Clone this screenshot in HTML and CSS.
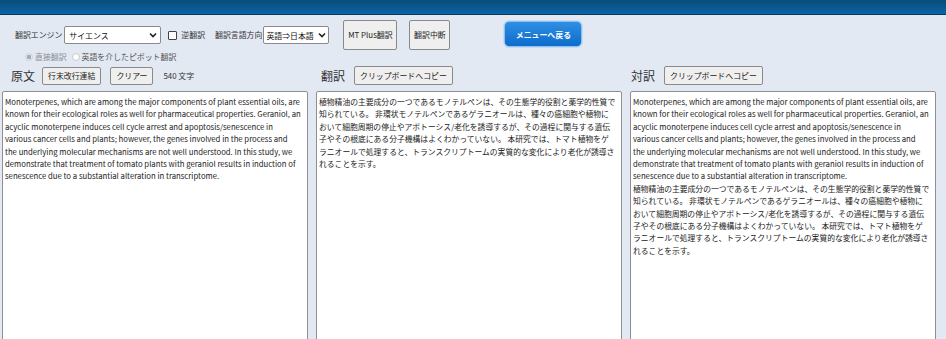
FILE: index.html
```html
<!DOCTYPE html>
<html lang="ja">
<head>
<meta charset="utf-8">
<title>翻訳</title>
<link rel="stylesheet" href="styles.css">
</head>
<body>
<header class="topbar"></header>
<section class="controls">
  <div class="row1">
    <span class="lbl">翻訳エンジン</span>
    <select class="sel sel-engine"><option>サイエンス</option></select>
    <input type="checkbox" class="chk" id="rev"><label for="rev" class="lbl chk-lbl">逆翻訳</label>
    <span class="lbl dir-lbl">翻訳言語方向</span>
    <select class="sel sel-dir"><option>英語⇒日本語</option></select>
    <button class="btn btn-big btn-mt">MT Plus翻訳</button>
    <button class="btn btn-big btn-stop">翻訳中断</button>
    <button class="btn-menu">メニューへ戻る</button>
  </div>
  <div class="row2">
    <input type="radio" class="rad" name="mode" checked disabled><span class="rad-lbl dis">直接翻訳</span>
    <input type="radio" class="rad" name="mode"><span class="rad-lbl">英語を介したピボット翻訳</span>
  </div>
</section>
<main class="panes">
  <div class="pane pane-src">
    <div class="pane-head">
      <h2 class="ttl">原文</h2>
      <button class="btn btn-sm">行末改行連結</button>
      <button class="btn btn-sm btn-clear">クリアー</button>
      <span class="count">540 文字</span>
    </div>
    <div class="box">
      <div class="en">Monoterpenes, which are among the major components of plant essential oils, are</div>
      <div class="en">known for their ecological roles as well for pharmaceutical properties. Geraniol, an</div>
      <div class="en">acyclic monoterpene induces cell cycle arrest and apoptosis/senescence in</div>
      <div class="en">various cancer cells and plants; however, the genes involved in the process and</div>
      <div class="en">the underlying molecular mechanisms are not well understood. In this study, we</div>
      <div class="en">demonstrate that treatment of tomato plants with geraniol results in induction of</div>
      <div class="en">senescence due to a substantial alteration in transcriptome.</div>
    </div>
  </div>
  <div class="pane pane-tr">
    <div class="pane-head">
      <h2 class="ttl">翻訳</h2>
      <button class="btn btn-sm">クリップボードへコピー</button>
    </div>
    <div class="box">
      <div class="ja">植物精油の主要成分の一つであるモノテルペンは、その生態学的役割と薬学的性質で</div>
      <div class="ja">知られている。 非環状モノテルペンであるゲラニオールは、種々の癌細胞や植物に</div>
      <div class="ja">おいて細胞周期の停止やアポトーシス/老化を誘導するが、その過程に関与する遺伝</div>
      <div class="ja">子やその根底にある分子機構はよくわかっていない。 本研究では、トマト植物をゲ</div>
      <div class="ja">ラニオールで処理すると、トランスクリプトームの実質的な変化により老化が誘導さ</div>
      <div class="ja">れることを示す。</div>
    </div>
  </div>
  <div class="pane pane-bi">
    <div class="pane-head">
      <h2 class="ttl">対訳</h2>
      <button class="btn btn-sm">クリップボードへコピー</button>
    </div>
    <div class="box">
      <div class="en">Monoterpenes, which are among the major components of plant essential oils, are</div>
      <div class="en">known for their ecological roles as well for pharmaceutical properties. Geraniol, an</div>
      <div class="en">acyclic monoterpene induces cell cycle arrest and apoptosis/senescence in</div>
      <div class="en">various cancer cells and plants; however, the genes involved in the process and</div>
      <div class="en">the underlying molecular mechanisms are not well understood. In this study, we</div>
      <div class="en">demonstrate that treatment of tomato plants with geraniol results in induction of</div>
      <div class="en">senescence due to a substantial alteration in transcriptome.</div>
      <div class="ja">植物精油の主要成分の一つであるモノテルペンは、その生態学的役割と薬学的性質で</div>
      <div class="ja">知られている。 非環状モノテルペンであるゲラニオールは、種々の癌細胞や植物に</div>
      <div class="ja">おいて細胞周期の停止やアポトーシス/老化を誘導するが、その過程に関与する遺伝</div>
      <div class="ja">子やその根底にある分子機構はよくわかっていない。 本研究では、トマト植物をゲ</div>
      <div class="ja">ラニオールで処理すると、トランスクリプトームの実質的な変化により老化が誘導さ</div>
      <div class="ja">れることを示す。</div>
    </div>
  </div>
</main>
</body>
</html>
```
FILE: styles.css
```css
* { box-sizing: border-box; }
html, body { margin: 0; padding: 0; }
body {
  background: #e3e9f3;
  font-family: "Noto Sans CJK JP", "Noto Sans", sans-serif;
  font-size: 8px;
  color: #222;
  width: 946px;
  height: 339px;
  overflow: hidden;
}
.topbar {
  height: 15px;
  background: linear-gradient(#0a4b7a, #0a64a6);
  border-bottom: 1px solid #0a3658;
}
.controls { padding-left: 15px; }
.row1 {
  display: flex;
  align-items: center;
  height: 30px;
  margin-top: 5px;
}
.lbl { color: #333; font-size: 7.9px; line-height: 1; white-space: nowrap; }
.sel {
  appearance: none;
  -webkit-appearance: none;
  height: 18px;
  border: 1px solid #8a8a8a;
  border-radius: 2px;
  background-color: #fff;
  background-image: url("data:image/svg+xml;utf8,<svg xmlns='http://www.w3.org/2000/svg' width='8' height='6' viewBox='0 0 8 6'><path d='M1 1.5 L4 4.5 L7 1.5' fill='none' stroke='%23222' stroke-width='1.6'/></svg>");
  background-repeat: no-repeat;
  background-position: right 3px center;
  font-family: inherit;
  font-size: 7.9px;
  color: #111;
  padding: 0 12px 0 4px;
  margin: 0;
}
.sel-engine { width: 97px; margin-left: 2px; }
.chk {
  appearance: none;
  -webkit-appearance: none;
  width: 9px; height: 9px;
  border: 1px solid #444;
  border-radius: 1px;
  background: #fff;
  margin: 0 0 0 7px;
}
.chk-lbl { margin-left: 4px; }
.dir-lbl { margin-left: 10px; }
.sel-dir { width: 66px; margin-left: 1px; padding: 0 10px 0 2px; background-position: right 2px center; }
.btn {
  font-family: inherit;
  font-size: 7.9px;
  color: #222;
  background: #efefef;
  border: 1px solid #8a8a8a;
  border-radius: 2px;
  padding: 0 4px;
  margin: 0;
  white-space: nowrap;
  line-height: 1;
}
.btn-big { height: 30px; }
.btn-mt { margin-left: 14px; width: 54px; padding: 0; }
.btn-stop { margin-left: 12px; width: 41px; padding: 0; }
.btn-menu {
  margin-left: 54px;
  width: 78px;
  height: 26px;
  margin-top: -2px;
  border: 1px solid #8fc0ee;
  border-radius: 5px;
  background: linear-gradient(#2f8fe3, #0d6bcc);
  color: #fff;
  font-family: inherit;
  font-weight: bold;
  font-size: 7.9px;
  padding: 0;
  box-shadow: 0 0 0 1px #c6dcf3;
}
.row2 {
  display: flex;
  align-items: center;
  height: 13px;
  padding-left: 10px;
  margin-top: 0;
}
.rad {
  appearance: none;
  -webkit-appearance: none;
  width: 8px; height: 8px;
  border-radius: 50%;
  border: 1px solid #c4c8ce;
  background: #fff;
  margin: 0;
}
.rad:checked { background: radial-gradient(circle, #a8acb2 0 2px, #e6e8ec 2.5px); border-color: #cfd2d7; }
.rad + .rad-lbl { margin-left: 2px; }
.rad-lbl { font-size: 7.9px; color: #555; margin-right: 5px; }
.rad-lbl.dis { color: #8b8f96; }
.panes {
  display: grid;
  grid-template-columns: 306px 306px 306px;
  column-gap: 8px;
  padding-left: 2px;
  margin-top: 1px;
}
.pane-head {
  display: flex;
  align-items: center;
  height: 23px;
}
.pane-src .pane-head { padding-left: 9px; }
.pane-tr .pane-head { padding-left: 5px; }
.pane-bi .pane-head { padding-left: 1px; }
.ttl {
  margin: 0;
  font-size: 12px;
  font-weight: normal;
  color: #333;
  line-height: 1;
}
.btn-sm { height: 18px; margin-left: 7px; padding: 0 5px; }
.pane-tr .btn-sm, .pane-bi .btn-sm { margin-left: 9px; height: 19px; }
.btn-clear { margin-left: 9px; }
.count { margin-left: 10px; font-size: 7.9px; color: #333; }
.box {
  margin-top: 4px;
  height: 260px;
  background: #fff;
  border: 1px solid #8d8f94;
  border-radius: 2px 2px 0 0;
  padding: 4px 2px 3px;
  overflow: hidden;
}
.en, .ja {
  white-space: nowrap;
  line-height: 12.4px;
  height: 12.4px;
  color: #222;
}
.en { font-size: 7.74px; }
.ja { font-size: 7.8px; }
```
